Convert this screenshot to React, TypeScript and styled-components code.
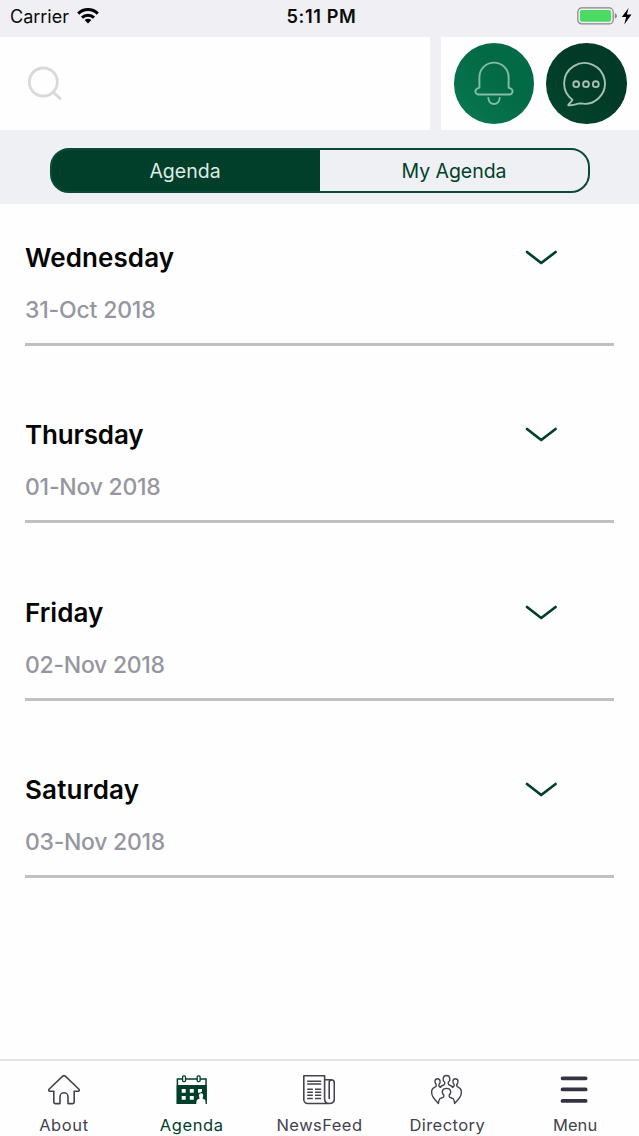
import React from "react";
import styled, { createGlobalStyle } from "styled-components";

const GREEN = "#013f2a";
const INK = "#43434d";

const GlobalStyle = createGlobalStyle`
  * { box-sizing: border-box; }
  body { margin: 0; background: #fefefe; font-family: Inter, "Liberation Sans", sans-serif; }
  button { font: inherit; color: inherit; background: none; border: 0; padding: 0; }
  svg { display: block; flex: none; }
`;

const Screen = styled.div`
  width: 639px;
  height: 1136px;
  display: flex;
  flex-direction: column;
  overflow: hidden;
  background: #fefefe;
`;

const StatusBar = styled.header`
  height: 37px;
  flex: none;
  display: grid;
  grid-template-columns: 1fr auto 1fr;
  align-items: center;
  padding: 0 7px 5px 10px;
  background: #efeff4;
  color: #0a0a0a;
`;

const Carrier = styled.div`
  display: flex;
  align-items: center;
  gap: 8px;
  font-size: 18px;
`;

const Clock = styled.div`
  font-size: 18.2px;
  font-weight: 600;
  letter-spacing: 0.6px;
  padding-left: 1px;
`;

const Power = styled.div`
  display: flex;
  justify-content: flex-end;
`;

const TopRow = styled.div`
  height: 93px;
  flex: none;
  display: flex;
  gap: 11px;
  background: #efeff4;
`;

const SearchBox = styled.div`
  width: 430px;
  padding: 28px 26px;
  background: #fefefe;
`;

const Actions = styled.div`
  flex: 1;
  display: flex;
  align-items: center;
  gap: 12px;
  padding-left: 12.5px;
  background: #fefefe;
`;

const RoundButton = styled.button<{ $fill: string }>`
  width: 80.5px;
  height: 80.5px;
  border-radius: 50%;
  display: grid;
  place-items: center;
  background: ${(p) => p.$fill};
`;

const SegmentArea = styled.div`
  height: 74px;
  flex: none;
  padding: 18px 49.500px 0 49.500px;
  background: #eff0f4;
`;

const Segments = styled.div`
  height: 45px;
  display: flex;
  border: 2px solid #0c4a37;
  border-radius: 19px;
  background: linear-gradient(90deg, ${GREEN} 50%, transparent 50%) border-box;
`;

const Segment = styled.button<{ $active?: boolean }>`
  flex: 1;
  font-size: 19.5px;
  letter-spacing: ${(p) => (p.$active ? 0 : -0.05)}px;
  padding-left: ${(p) => (p.$active ? 0 : 2)}px;
  color: ${(p) => (p.$active ? "#dfeae5" : GREEN)};
`;

const DayList = styled.main`
  flex: 1;
  padding: 0 25px;
`;

const DayRow = styled.section`
  height: 177.4px;
  padding-top: 38px;
`;

const DayHead = styled.div`
  height: 32px;
  display: flex;
  align-items: center;
  justify-content: space-between;
  padding-right: 56px;
`;

const DayName = styled.h2<{ $track: number }>`
  margin: 0;
  font-size: 26px;
  font-weight: 560;
  line-height: 32px;
  letter-spacing: ${(p) => p.$track}px;
  color: #060606;
`;

const DayDate = styled.div<{ $track: number }>`
  height: 72px;
  padding-top: 21px;
  border-bottom: 3px solid #c0c0c2;
  font-size: 23px;
  font-weight: 540;
  line-height: 30px;
  letter-spacing: ${(p) => p.$track}px;
  color: #9696a0;
`;

const TabBar = styled.nav`
  height: 77px;
  flex: none;
  display: grid;
  grid-template-columns: repeat(5, 1fr);
  border-top: 2px solid #e4e4e4;
`;

const Tab = styled.button<{ $active?: boolean; $track: number }>`
  display: flex;
  flex-direction: column;
  align-items: center;
  padding-top: 13px;
  gap: 8px;
  font-size: 16.5px;
  line-height: 22px;
  letter-spacing: ${(p) => p.$track}px;
  color: ${(p) => (p.$active ? GREEN : INK)};
`;

const WifiIcon = () => (
  <svg width="22" height="16" viewBox="0 0 22 16" fill="none" stroke="#000" strokeWidth="3">
    <path d="M1.2 5.6a14 14 0 0 1 19.6 0" />
    <path d="M5 9.6a8.6 8.6 0 0 1 12 0" />
    <path d="M11 15.6l-3.4-3.5a4.9 4.9 0 0 1 6.8 0z" fill="#000" stroke="none" />
  </svg>
);

const BatteryIcon = () => (
  <svg width="55" height="18" viewBox="0 0 55 18">
    <rect x=".8" y=".9" width="35.4" height="16" rx="4" fill="none" stroke="#85858a" strokeWidth="1.2" />
    <rect x="2.9" y="3" width="31.2" height="11.8" rx="2" fill="#4cd964" />
    <path d="M37.8 6q2.2 1 2.2 2.9t-2.2 2.9z" fill="#85858a" />
    <path d="M51.6 1L44.8 10.100h4.400l-2 7.400 7.300-9.900h-4.600z" fill="#000" />
  </svg>
);

const SearchIcon = () => (
  <svg width="38" height="38" viewBox="0 0 38 38" fill="none" stroke="#d9d9d9" strokeWidth="2.8" strokeLinecap="round">
    <circle cx="17.3" cy="17" r="14" />
    <path d="M27.6 27.6l6.6 6" />
  </svg>
);

const BellIcon = () => (
  <svg width="42" height="46" viewBox="0 0 42 46" fill="none" stroke="#86bda4" strokeWidth="1.9" strokeLinecap="round" strokeLinejoin="round">
    <path d="M6.4 26.700V16.200a14.600 14.600 0 0 1 29.200 0v10.500c1.300.5 4 1 4 3.600a3.200 3.200 0 0 1-3.200 3.200H5.600a3.200 3.200 0 0 1-3.200-3.200c0-2.600 2.700-3.100 4-3.600z" />
    <path d="M15.300 37c.6 8 10.800 8 11.400 0" />
  </svg>
);

const ChatIcon = () => (
  <svg width="46" height="46" viewBox="0 0 46 46" fill="none" stroke="#a3c0b2" strokeWidth="1.9" strokeLinejoin="round">
    <path d="M9.400 38.800A20.400 20.400 0 1 1 17.500 42.400C13.500 42.600 9.500 44.800 5.200 44.200C6.500 42.300 8.400 40.800 9.400 38.800z" />
    <circle cx="13.200" cy="23.200" r="2.900" />
    <circle cx="23" cy="23.200" r="2.900" />
    <circle cx="32.800" cy="23.200" r="2.900" />
  </svg>
);

const ChevronIcon = () => (
  <svg width="34" height="18" viewBox="0 0 34 18" fill="none" stroke={GREEN} strokeWidth="2.700" strokeLinecap="round" strokeLinejoin="round">
    <path d="M3 3L17.200 14L31.600 3" />
  </svg>
);

const HomeIcon = () => (
  <svg width="32" height="32" viewBox="0 0 32 32" fill="none" stroke={INK} strokeWidth="1.600" strokeLinejoin="round">
    <path d="M14.700 2.200L1.300 15c-1.100 1.100-.3 2.300 1 2.300h3.500v10.800c0 1 .5 1.500 1.500 1.500H12v-6.800a4 4 0 0 1 8 0v6.800h4.700c1 0 1.500-.5 1.500-1.500V17.300h3.500c1.300 0 2.100-1.200 1-2.300L17.300 2.200c-.9-.8-1.700-.8-2.600 0z" />
  </svg>
);

const CalendarIcon = () => (
  <svg width="32" height="32" viewBox="0 0 32 32">
    <path d="M1.400 4.900h28.600v24.400H1.400z" fill="#fefefe" stroke={GREEN} strokeWidth="1.500" />
    <path d="M.7 11h30v18.900H.7z" fill={GREEN} />
    <g fill="#fefefe" stroke={GREEN} strokeWidth="1.300">
      <rect x="6.600" y="1.900" width="2.900" height="5.700" rx="1" />
      <rect x="21.200" y="1.900" width="2.900" height="5.700" rx="1" />
    </g>
    <g fill="#fefefe">
      <rect x="5.700" y="15" width="4" height="3.800" rx=".6" />
      <rect x="13.800" y="15" width="4" height="3.800" rx=".6" />
      <path d="M22 15h4v2.600l-2 1.200h-2z" />
      <rect x="5.700" y="22" width="4" height="3.800" rx=".6" />
      <rect x="13.800" y="22" width="4" height="3.800" rx=".6" />
      <path d="M25.200 19.300c1.800 0 2.300 1.600 1.900 3l-.6 2.200 2 .9c1 .5 1.100 1.900 1.100 4.600h-9.300c.1-2.700.3-4.100 1.300-4.600l2-.9-.6-2.200c-.4-1.400.4-3 2.200-3z" />
    </g>
  </svg>
);

const NewsIcon = () => (
  <svg width="32" height="32" viewBox="0 0 32 32" fill="none" stroke={INK} strokeWidth="1.600" strokeLinejoin="round">
    <path d="M26 29.500H4.800a4 4 0 0 1-4-4V1.800h20.800V25c0 3 1.800 4.500 4.600 4.500 3.300 0 5.100-1.700 5.100-4.500V9c0-2-1.300-3.200-3.200-3.200h-6.500" />
    <path d="M26.200 25V8.500c0-1.600 1-2.600 2.600-2.600" />
    <path d="M4.200 7.200h14M4.200 10h14M4.200 15.300h5.600M12 15.300h6.200M4.200 18.300h5.600M12 18.300h6.200M4.200 21.300h5.600M12 21.300h6.200M4.200 24.500h5.600M12 24.500h6.200" strokeWidth="1.500" />
  </svg>
);

const PeopleIcon = () => (
  <svg width="32" height="32" viewBox="0.5 0 32 32" fill="none" stroke={INK} strokeWidth="1.400" strokeLinejoin="round" strokeLinecap="round">
    <path d="M14.200 8.300c-1.300-1-1.800-2.300-1.500-4 .3-1.700 1.500-2.800 3.300-2.800s3 1.100 3.300 2.800c.3 1.700-.2 3-1.500 4v1.800c0 1.200 3.300 1 4.500 3.100M14.200 8.300v1.800c0 1.200-3.300 1-4.500 3.100" />
    <path d="M5.700 10.500C3.900 8.700 4 4.700 7 4.700c3.100 0 3.200 4 1.400 5.800v1.600l1.800 1.200M5.700 10.500v1.600c0 1.100-3.600 1.300-4.300 3.900-.5 2.200-.4 4.600 1.200 7.200.9 1.600 2.600 3.600 5.300 6.300.2-2.300.4-3.900 1.400-4.800 1-.8 4-.8 4-2.100v-1.500c-2-1.500-2.600-6.700 2.700-6.700s4.700 5.200 2.700 6.700v1.500c0 1.300 3 1.300 4 2.100 1 .9 1.200 2.500 1.400 4.800 2.700-2.700 4.400-4.700 5.300-6.300 1.600-2.600 1.700-5 1.200-7.200-.7-2.600-4.300-2.800-4.300-3.900v-1.600" />
    <path d="M26.300 10.500c1.800-1.800 1.700-5.800-1.300-5.800-3.100 0-3.200 4-1.400 5.800v1.600l-1.800 1.200" />
  </svg>
);

const MenuIcon = () => (
  <svg width="32" height="32" viewBox="0 0 32 32" stroke="#343343" strokeWidth="3.700" strokeLinecap="round">
    <path d="M3.500 4.300h23.200M3.500 15.400h23.200M3.500 26.900h23.200" />
  </svg>
);

const days = [
  { name: "Wednesday", date: "31-Oct 2018", nameTrack: 0.08, dateTrack: -0.18 },
  { name: "Thursday", date: "01-Nov 2018", nameTrack: -0.15, dateTrack: -0.25 },
  { name: "Friday", date: "02-Nov 2018", nameTrack: 0.05, dateTrack: -0.28 },
  { name: "Saturday", date: "03-Nov 2018", nameTrack: 0.2, dateTrack: -0.3 },
];

const tabs = [
  { label: "About", icon: <HomeIcon />, track: 0.6 },
  { label: "Agenda", icon: <CalendarIcon />, track: 0.6, active: true },
  { label: "NewsFeed", icon: <NewsIcon />, track: 0.45 },
  { label: "Directory", icon: <PeopleIcon />, track: 0.45 },
  { label: "Menu", icon: <MenuIcon />, track: 0.1 },
];

export default function App() {
  return (
    <>
      <GlobalStyle />
      <Screen>
        <StatusBar>
          <Carrier>
            Carrier
            <WifiIcon />
          </Carrier>
          <Clock>5:11 PM</Clock>
          <Power>
            <BatteryIcon />
          </Power>
        </StatusBar>
        <TopRow>
          <SearchBox>
            <SearchIcon />
          </SearchBox>
          <Actions>
            <RoundButton $fill="linear-gradient(45deg, #087951, #036a46 60%)" aria-label="Notifications">
              <BellIcon />
            </RoundButton>
            <RoundButton $fill="linear-gradient(45deg, #04472f, #013a26 60%)" aria-label="Messages">
              <ChatIcon />
            </RoundButton>
          </Actions>
        </TopRow>
        <SegmentArea>
          <Segments>
            <Segment $active>Agenda</Segment>
            <Segment>My Agenda</Segment>
          </Segments>
        </SegmentArea>
        <DayList>
          {days.map((d) => (
            <DayRow key={d.name}>
              <DayHead>
                <DayName $track={d.nameTrack}>{d.name}</DayName>
                <ChevronIcon />
              </DayHead>
              <DayDate $track={d.dateTrack}>{d.date}</DayDate>
            </DayRow>
          ))}
        </DayList>
        <TabBar>
          {tabs.map((t) => (
            <Tab key={t.label} $active={t.active} $track={t.track}>
              {t.icon}
              {t.label}
            </Tab>
          ))}
        </TabBar>
      </Screen>
    </>
  );
}
